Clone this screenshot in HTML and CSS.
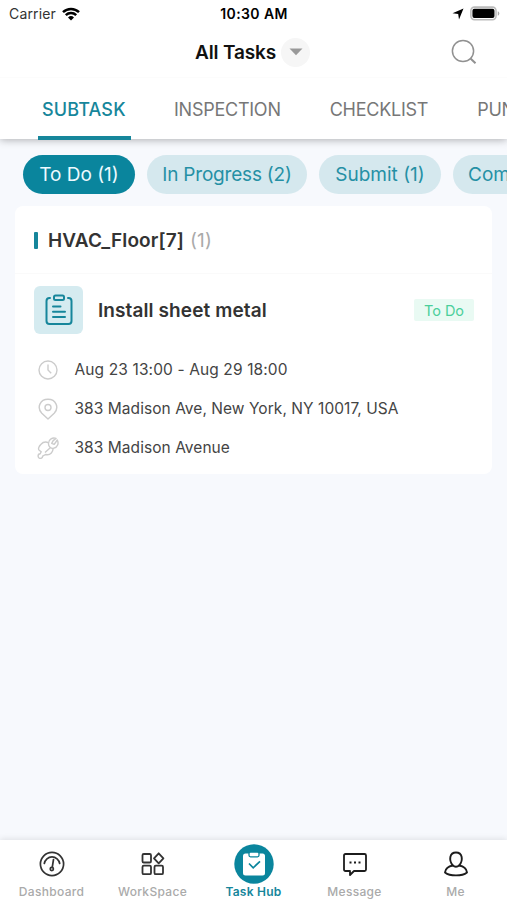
FILE: index.html
```html
<!DOCTYPE html>
<html lang="en">
<head>
<meta charset="utf-8">
<title>Task Hub</title>
<link rel="stylesheet" href="styles.css">
</head>
<body>
<div class="app">
  <header class="top">
    <div class="status">
      <div class="status-left">
        <span class="carrier">Carrier</span>
        <svg width="18" height="14" viewBox="0 0 18 14" fill="none" stroke="#000" stroke-width="2.5"><path d="M1 5.2a11.5 11.5 0 0 1 16 0M3.8 8.2a7.5 7.5 0 0 1 10.4 0"/><path d="M9 13.6 6 10.5a4.4 4.4 0 0 1 6 0z" fill="#000" stroke="none"/></svg>
      </div>
      <span class="time">10:30 AM</span>
      <div class="status-right">
        <svg width="12" height="12" viewBox="0 0 12 12"><path d="M11.5.5 7 11.4 6.2 6 .5 5.2z" fill="#000"/></svg>
        <svg width="30" height="15" viewBox="0 0 31 15"><rect x=".9" y=".9" width="26" height="13" rx="3.7" fill="#fff" stroke="#bbb" stroke-width="1.6"/><rect x="2.5" y="2.6" width="22.8" height="9.6" rx="2" fill="#000"/><path d="M28.7 5.2q1.6.6 1.6 2.3t-1.6 2.3z" fill="#aaa"/></svg>
      </div>
    </div>
    <div class="title-row">
      <h1 class="title">All Tasks</h1>
      <button class="drop" aria-label="Choose"><svg width="14" height="8" viewBox="0 0 14 8"><path d="M.5.5h13L7 7.3z" fill="#999"/></svg></button>
      <svg class="search" width="26" height="26" viewBox="0 0 26 26" fill="none" stroke="#919191" stroke-width="1.5"><circle cx="12" cy="12" r="10.6"/><path d="m19.5 19.5 5 4.8" stroke-width="2"/></svg>
    </div>
    <nav class="tabs">
      <a class="tab active">SUBTASK</a>
      <a class="tab">INSPECTION</a>
      <a class="tab">CHECKLIST</a>
      <a class="tab">PUNCH</a>
    </nav>
  </header>
  <main class="content">
    <div class="chips">
      <span class="chip c1 selected">To Do (1)</span>
      <span class="chip c2">In Progress (2)</span>
      <span class="chip c3">Submit (1)</span>
      <span class="chip c4">Completed</span>
    </div>
    <section class="card">
      <div class="group">
        <i class="mark"></i><h2 class="group-name">HVAC_Floor[7]</h2><span class="count">(1)</span>
      </div>
      <div class="task">
        <div class="task-icon">
          <svg width="28" height="32" viewBox="0 0 28 32" fill="none" stroke="#16869b" stroke-width="2" stroke-linecap="round" stroke-linejoin="round"><path d="M5 4H4.500Q1.500 4 1.500 7v20q0 3 3 3h19q3 0 3-3V7q0-3-3-3H23"/><rect x="9" y="1.500" width="10" height="4.500" rx="1.500"/><path d="M8 12.500h7.500M8 17.800h12M8 23h12"/></svg>
        </div>
        <h3 class="task-name">Install sheet metal</h3>
        <span class="badge">To Do</span>
      </div>
      <ul class="facts">
        <li><svg width="22" height="22" viewBox="0 0 22 22" fill="none" stroke="#ccc" stroke-width="1.400"><circle cx="11" cy="11" r="9"/><path d="M11 5.500V11l3.200 3.200"/></svg><span class="date">Aug 23 13:00 - Aug 29 18:00</span></li>
        <li><svg width="22" height="22" viewBox="0 0 22 22" fill="none" stroke="#ccc" stroke-width="1.400" stroke-linejoin="round"><path d="M11 21 4.800 15.200C-.5 9.500 3 1.300 11 1.300s11.500 8.200 6.200 13.900z"/><circle cx="11" cy="9.500" r="3"/></svg><span>383 Madison Ave, New York, NY 10017, USA</span></li>
        <li><svg width="22" height="22" viewBox="0 0 22 22" fill="none" stroke="#ccc" stroke-width="1.400" stroke-linejoin="round"><path d="M11.500 5.600C8.500 4.500 6 5 4 7.200 1.800 9.500.8 12 2.200 13.200l2 1.600-1 2a2.300 2.300 0 1 0 2.500 2.300l2.800-1.600 2 .3c2.700 0 5.700-3 5.500-6.200"/><path d="M20.300 3c1.800 3.500.2 7.200-3.300 8.200-3 .8-5.800-1.500-5.500-5C11.700 2.500 15.500 0 19 1.400l-2.800 2.200-1.500 2.700 2.500 1 3.100-4.300zM8 15.500l5-4.500"/></svg><span>383 Madison Avenue</span></li>
      </ul>
    </section>
  </main>
  <footer class="bar">
    <a class="item"><span class="glyph"><svg width="26" height="26" viewBox="0 0 26 26" fill="none" stroke="#333" stroke-width="1.700" stroke-linecap="round"><circle cx="13" cy="13" r="11.600"/><path d="M5.300 12.500a7.800 7.800 0 0 1 15.400 0M14.500 8.500 13.300 16"/><circle cx="12.800" cy="18" r="1.600"/></svg></span><span class="label">Dashboard</span></a>
    <a class="item"><span class="glyph"><svg width="24" height="24" viewBox="0 0 24 24" fill="none" stroke="#333" stroke-width="1.800" stroke-linejoin="round"><rect x="1.500" y="2" width="8.500" height="8.500" rx="1.300"/><rect x="1.500" y="13.700" width="8.500" height="8.500" rx="1.300"/><rect x="13.500" y="13.700" width="8.500" height="8.500" rx="1.300"/><path d="m17.700 1.300 4.700 5-4.700 5-4.700-5z"/></svg></span><span class="label">WorkSpace</span></a>
    <a class="item current"><span class="glyph"><svg width="40" height="40" viewBox="0 0 40 40"><circle cx="20" cy="20" r="19.700" fill="#0a859d"/><rect x="9" y="9.500" width="22" height="22" rx="2.500" fill="#fff"/><rect x="15" y="8" width="10" height="4.800" rx="1.500" fill="#fff" stroke="#0a859d" stroke-width="1.300"/><path d="m15 19.500 4.200 4.300 6.800-6.500" fill="none" stroke="#0a859d" stroke-width="1.700"/></svg></span><span class="label">Task Hub</span></a>
    <a class="item"><span class="glyph"><svg width="26" height="26" viewBox="0 0 26 26" fill="none" stroke="#1c1c1c" stroke-width="1.800" stroke-linejoin="round"><path d="M3.500 3h19q1.500 0 1.500 1.500v14q0 1.500-1.500 1.500H12l-4 4v-4H3.500Q2 20 2 18.500v-14Q2 3 3.500 3z"/><path d="M7.500 11.500h2M12 11.500h2M16.500 11.500h2"/></svg></span><span class="label">Message</span></a>
    <a class="item"><span class="glyph"><svg width="26" height="26" viewBox="0 0 26 26" fill="none" stroke="#1c1c1c" stroke-width="1.900" stroke-linejoin="round"><path d="M9.800 14.500C5.500 9 6.500 1.500 13 1.500s7.500 7.500 3.200 13c4.300.8 7.300 3.400 7.800 6.900-5 4-17 4-22 0 .5-3.500 3.500-6.100 7.800-6.900z"/><path d="M9.600 14.300c2 1.800 4.800 1.800 6.800 0"/></svg></span><span class="label">Me</span></a>
  </footer>
</div>
</body>
</html>
```

FILE: styles.css
```css
* { box-sizing: border-box; }
body { margin: 0; font-family: Inter, "Liberation Sans", sans-serif; color: #333; }
h1, h2, h3, ul { margin: 0; padding: 0; }
svg { display: block; flex: none; }
.app { width: 507px; height: 900px; display: flex; flex-direction: column; overflow: hidden; background: #f7f9fd; }
.top { flex: none; height: 139px; background: #fff; box-shadow: 0 1px 8px rgba(0, 0, 0, .3); z-index: 1; }
.status { height: 27px; display: grid; grid-template-columns: 1fr auto 1fr; align-items: center; padding: 0 7px 0 9px; color: #000; font-size: 14px; }
.status-left { display: flex; align-items: center; gap: 6px; }
.carrier { color: #333; letter-spacing: .15px; }
.time { font-weight: 600; letter-spacing: .4px; margin-right: 1px; }
.status-right { display: flex; justify-content: flex-end; align-items: center; gap: 6px; }
.title-row { height: 50px; display: flex; align-items: center; padding: 0 30px 0 195px; }
.title { width: 81px; font-size: 19px; font-weight: 600; letter-spacing: -.15px; color: #111; white-space: nowrap; }
.drop { width: 29px; height: 29px; margin-left: 5px; padding: 0; border: 0; border-radius: 50%; background: #f6f6f6; display: flex; align-items: center; justify-content: center; }
.search { margin-left: auto; }
.tabs { height: 62px; display: flex; gap: 39px; padding-left: 38px; font-size: 18px; letter-spacing: -.25px; color: #777; border-top: 1px solid #fcfcfc; }
.tab { flex: none; height: 62px; line-height: 64px; padding: 0 5px; white-space: nowrap; }
.tab.active { width: 93px; padding: 0 4px; color: #16869b; border-bottom: 4px solid #16869b; font-weight: 500; letter-spacing: .15px; margin-right: -1px; }
.content { flex: 1; padding-top: 16px; }
.chips { display: flex; gap: 12px; margin-left: 23px; }
.chip { flex: none; height: 39px; border-radius: 20px; background: #d5e8ee; color: #2590a5; font-size: 19px; line-height: 40px; text-align: center; white-space: nowrap; }
.chip.selected { background: #0a859d; color: #eefaff; }
.c1 { width: 112px; }
.c2 { width: 160px; letter-spacing: -.2px; }
.c3 { width: 122px; }
.c4 { width: 128px; }
.card { margin: 12px 15px 0; width: 477px; height: 268px; border-radius: 8px; background: #fff; }
.group { height: 68px; display: flex; align-items: center; padding: 2px 0 0 19px; border-bottom: 1px solid #fafafa; }
.mark { width: 4px; height: 17px; border-radius: 1px; background: #16869b; margin-right: 10px; }
.group-name { font-size: 19px; font-weight: 600; letter-spacing: .12px; }
.count { margin-left: 6px; font-size: 19px; letter-spacing: .2px; color: #aaa; }
.task { height: 48px; margin-top: 12px; display: flex; align-items: center; padding: 0 18px 0 19px; }
.task-icon { width: 49px; height: 48px; border-radius: 6px; background: #d5ebf0; display: flex; align-items: center; justify-content: center; }
.task-name { margin-left: 15px; font-size: 19px; font-weight: 600; letter-spacing: .1px; white-space: nowrap; }
.badge { margin-left: auto; width: 60px; height: 22px; border-radius: 2px; background: #e9faf3; color: #4bcf9b; font-size: 14.500px; line-height: 23px; text-align: center; }
.facts { list-style: none; padding: 16px 0 0 22px; font-size: 15.500px; letter-spacing: .05px; color: #444; }
.facts li { height: 39px; display: flex; align-items: center; gap: 15.500px; white-space: nowrap; }
.date { letter-spacing: .12px; }
.bar { flex: none; height: 60px; background: #fff; box-shadow: 0 -1px 6px rgba(0, 0, 0, .1); display: grid; grid-template-columns: repeat(5, 101px); justify-content: center; }
.item { display: flex; flex-direction: column; align-items: center; padding-top: 3px; }
.glyph { height: 41px; display: flex; align-items: center; }
.label { font-size: 12px; line-height: 15px; letter-spacing: .32px; font-weight: 500; color: #aaa; white-space: nowrap; }
.current .label { color: #16869b; font-weight: 600; letter-spacing: .25px; }
```
